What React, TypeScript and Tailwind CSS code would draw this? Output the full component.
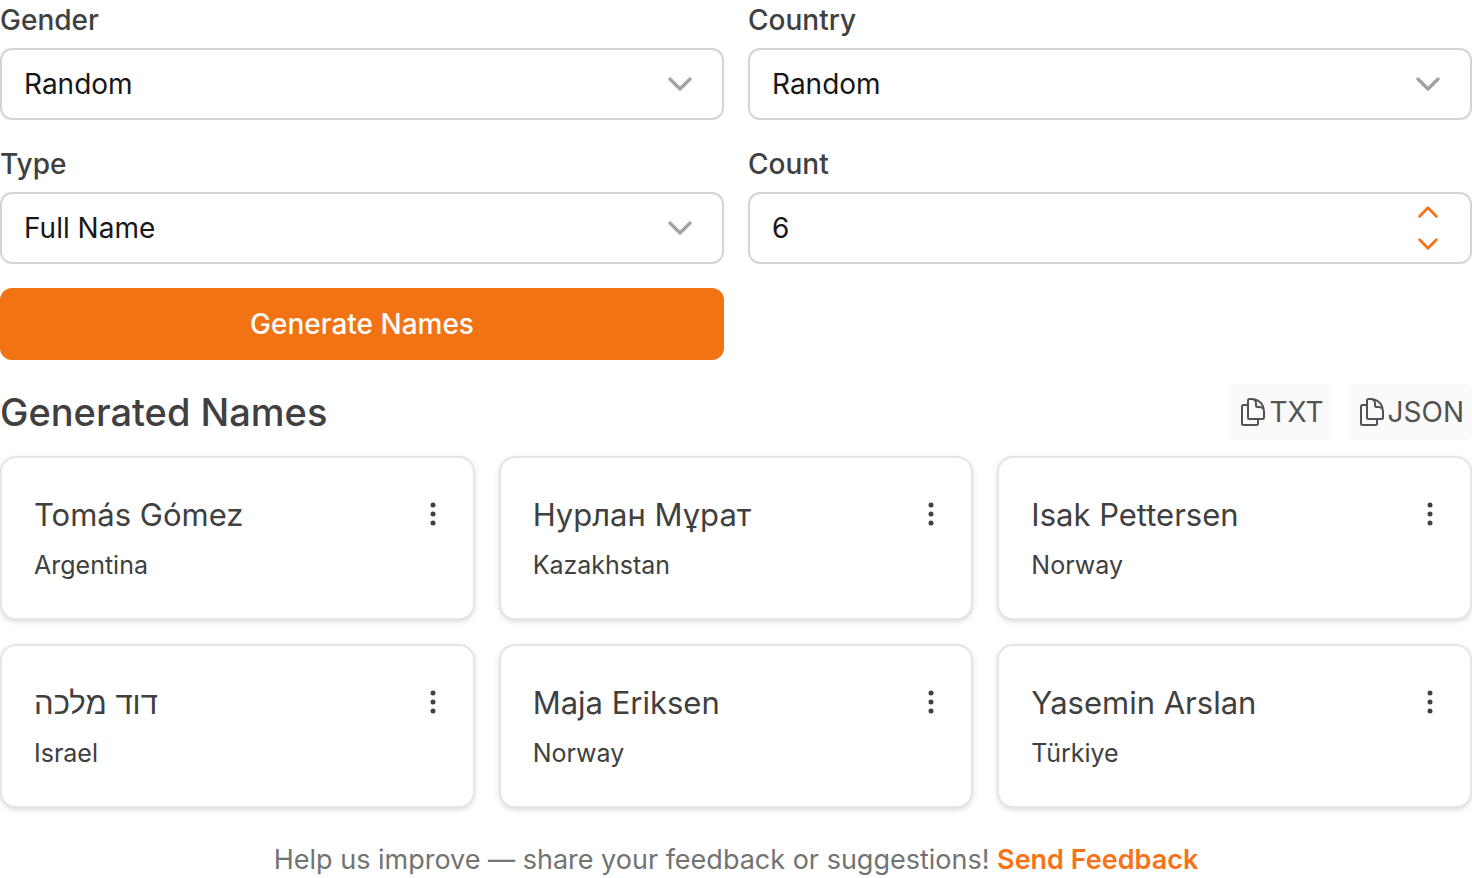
import { useState } from 'react';
import type { ReactNode } from 'react';
import { HiOutlineDocumentDuplicate } from 'react-icons/hi2';

interface GeneratedName {
  name: string;
  country: string;
}

const NAMES: GeneratedName[] = [
  { name: 'Tomás Gómez', country: 'Argentina' },
  { name: 'Нурлан Мұрат', country: 'Kazakhstan' },
  { name: 'Isak Pettersen', country: 'Norway' },
  { name: 'דוד מלכה', country: 'Israel' },
  { name: 'Maja Eriksen', country: 'Norway' },
  { name: 'Yasemin Arslan', country: 'Türkiye' },
];

const FIELD_CLASSES =
  'h-[72px] w-full appearance-none rounded-xl border-2 border-[#d4d4d4] bg-white px-[22px] text-[28px] text-[#171717] outline-none';

function Chevron({ className, up = false }: { className: string; up?: boolean }) {
  return (
    <svg className={className} viewBox="0 0 24 14" fill="none" stroke="currentColor" strokeWidth="3.4" strokeLinecap="round" strokeLinejoin="round" aria-hidden="true">
      <path d={up ? 'M2 12 12 2l10 10' : 'M2 2l10 10L22 2'} />
    </svg>
  );
}

function Field({ id, label, children }: { id: string; label: string; children: ReactNode }) {
  return (
    <div className="flex flex-col gap-2">
      <label htmlFor={id} className="text-[28px] leading-10 font-medium">
        {label}
      </label>
      {children}
    </div>
  );
}

function SelectField({ id, label, options }: { id: string; label: string; options: string[] }) {
  return (
    <Field id={id} label={label}>
      <div className="relative">
        <select id={id} className={FIELD_CLASSES}>
          {options.map((option) => (
            <option key={option}>{option}</option>
          ))}
        </select>
        <Chevron className="pointer-events-none absolute top-1/2 right-8 h-[14px] w-6 -translate-y-1/2 text-[#a3a3a3]" />
      </div>
    </Field>
  );
}

function CopyButton({ label }: { label: string }) {
  return (
    <button type="button" className="flex h-14 items-center rounded-lg bg-[#fafafa] px-2 text-[28px] text-[#525252]">
      <HiOutlineDocumentDuplicate className="size-8" aria-hidden="true" />
      {label}
    </button>
  );
}

function NameCard({ name, country }: GeneratedName) {
  return (
    <li className="flex items-start justify-between rounded-2xl border-2 border-[#e5e5e5] bg-white p-8 shadow-[0_2px_6px_rgba(0,0,0,0.1),0_2px_4px_-2px_rgba(0,0,0,0.1)]">
      <div className="flex flex-col gap-1">
        <h3 className="text-[31px] leading-[50px]">{name}</h3>
        <p className="text-[25px] leading-[42px]">{country}</p>
      </div>
      <button type="button" aria-label={`Options for ${name}`} className="mt-2 flex h-8 w-4 items-center justify-center">
        <svg className="h-6 w-2" viewBox="0 0 8 24" fill="currentColor" aria-hidden="true">
          <circle cx="4" cy="3" r="2.5" />
          <circle cx="4" cy="12" r="2.5" />
          <circle cx="4" cy="21" r="2.5" />
        </svg>
      </button>
    </li>
  );
}

export default function App() {
  const [count, setCount] = useState(6);

  return (
    <main className="bg-white font-['Inter','Noto_Sans',sans-serif] text-[#404040]">
      <form className="grid grid-cols-2 gap-6" onSubmit={(e) => e.preventDefault()}>
        <SelectField id="gender" label="Gender" options={['Random', 'Male', 'Female']} />
        <SelectField id="country" label="Country" options={['Random', ...new Set(NAMES.map((n) => n.country))]} />
        <SelectField id="type" label="Type" options={['Full Name', 'First Name', 'Last Name']} />
        <Field id="count" label="Count">
          <div className="relative">
            <input
              id="count"
              type="text"
              inputMode="numeric"
              className={FIELD_CLASSES}
              value={count}
              onChange={(e) => setCount(Number(e.target.value) || 1)}
            />
            <div className="absolute inset-y-0 right-8 flex w-6 flex-col items-center justify-center gap-5 text-[#f97316]">
              <button type="button" aria-label="Increase count" onClick={() => setCount(count + 1)}>
                <Chevron up className="h-3 w-5" />
              </button>
              <button type="button" aria-label="Decrease count" onClick={() => setCount(Math.max(1, count - 1))}>
                <Chevron className="h-3 w-5" />
              </button>
            </div>
          </div>
        </Field>
        <button type="submit" className="h-[72px] rounded-xl bg-[#f27314] text-[28px] font-medium text-white">
          Generate Names
        </button>
      </form>

      <section>
        <div className="mt-6 mb-4 flex items-center justify-between">
          <h2 className="text-[38px] leading-14 font-medium">Generated Names</h2>
          <div className="flex gap-4">
            <CopyButton label="TXT" />
            <CopyButton label="JSON" />
          </div>
        </div>
        <ul className="grid grid-cols-3 gap-6">
          {NAMES.map((item) => (
            <NameCard key={item.name} {...item} />
          ))}
        </ul>
      </section>

      <p className="mt-8 text-center text-[27px] leading-10 text-[#737373]">
        Help us improve — share your feedback or suggestions!{' '}
        <a href="#feedback" className="font-semibold text-[#f97316]">
          Send Feedback
        </a>
      </p>
    </main>
  );
}
